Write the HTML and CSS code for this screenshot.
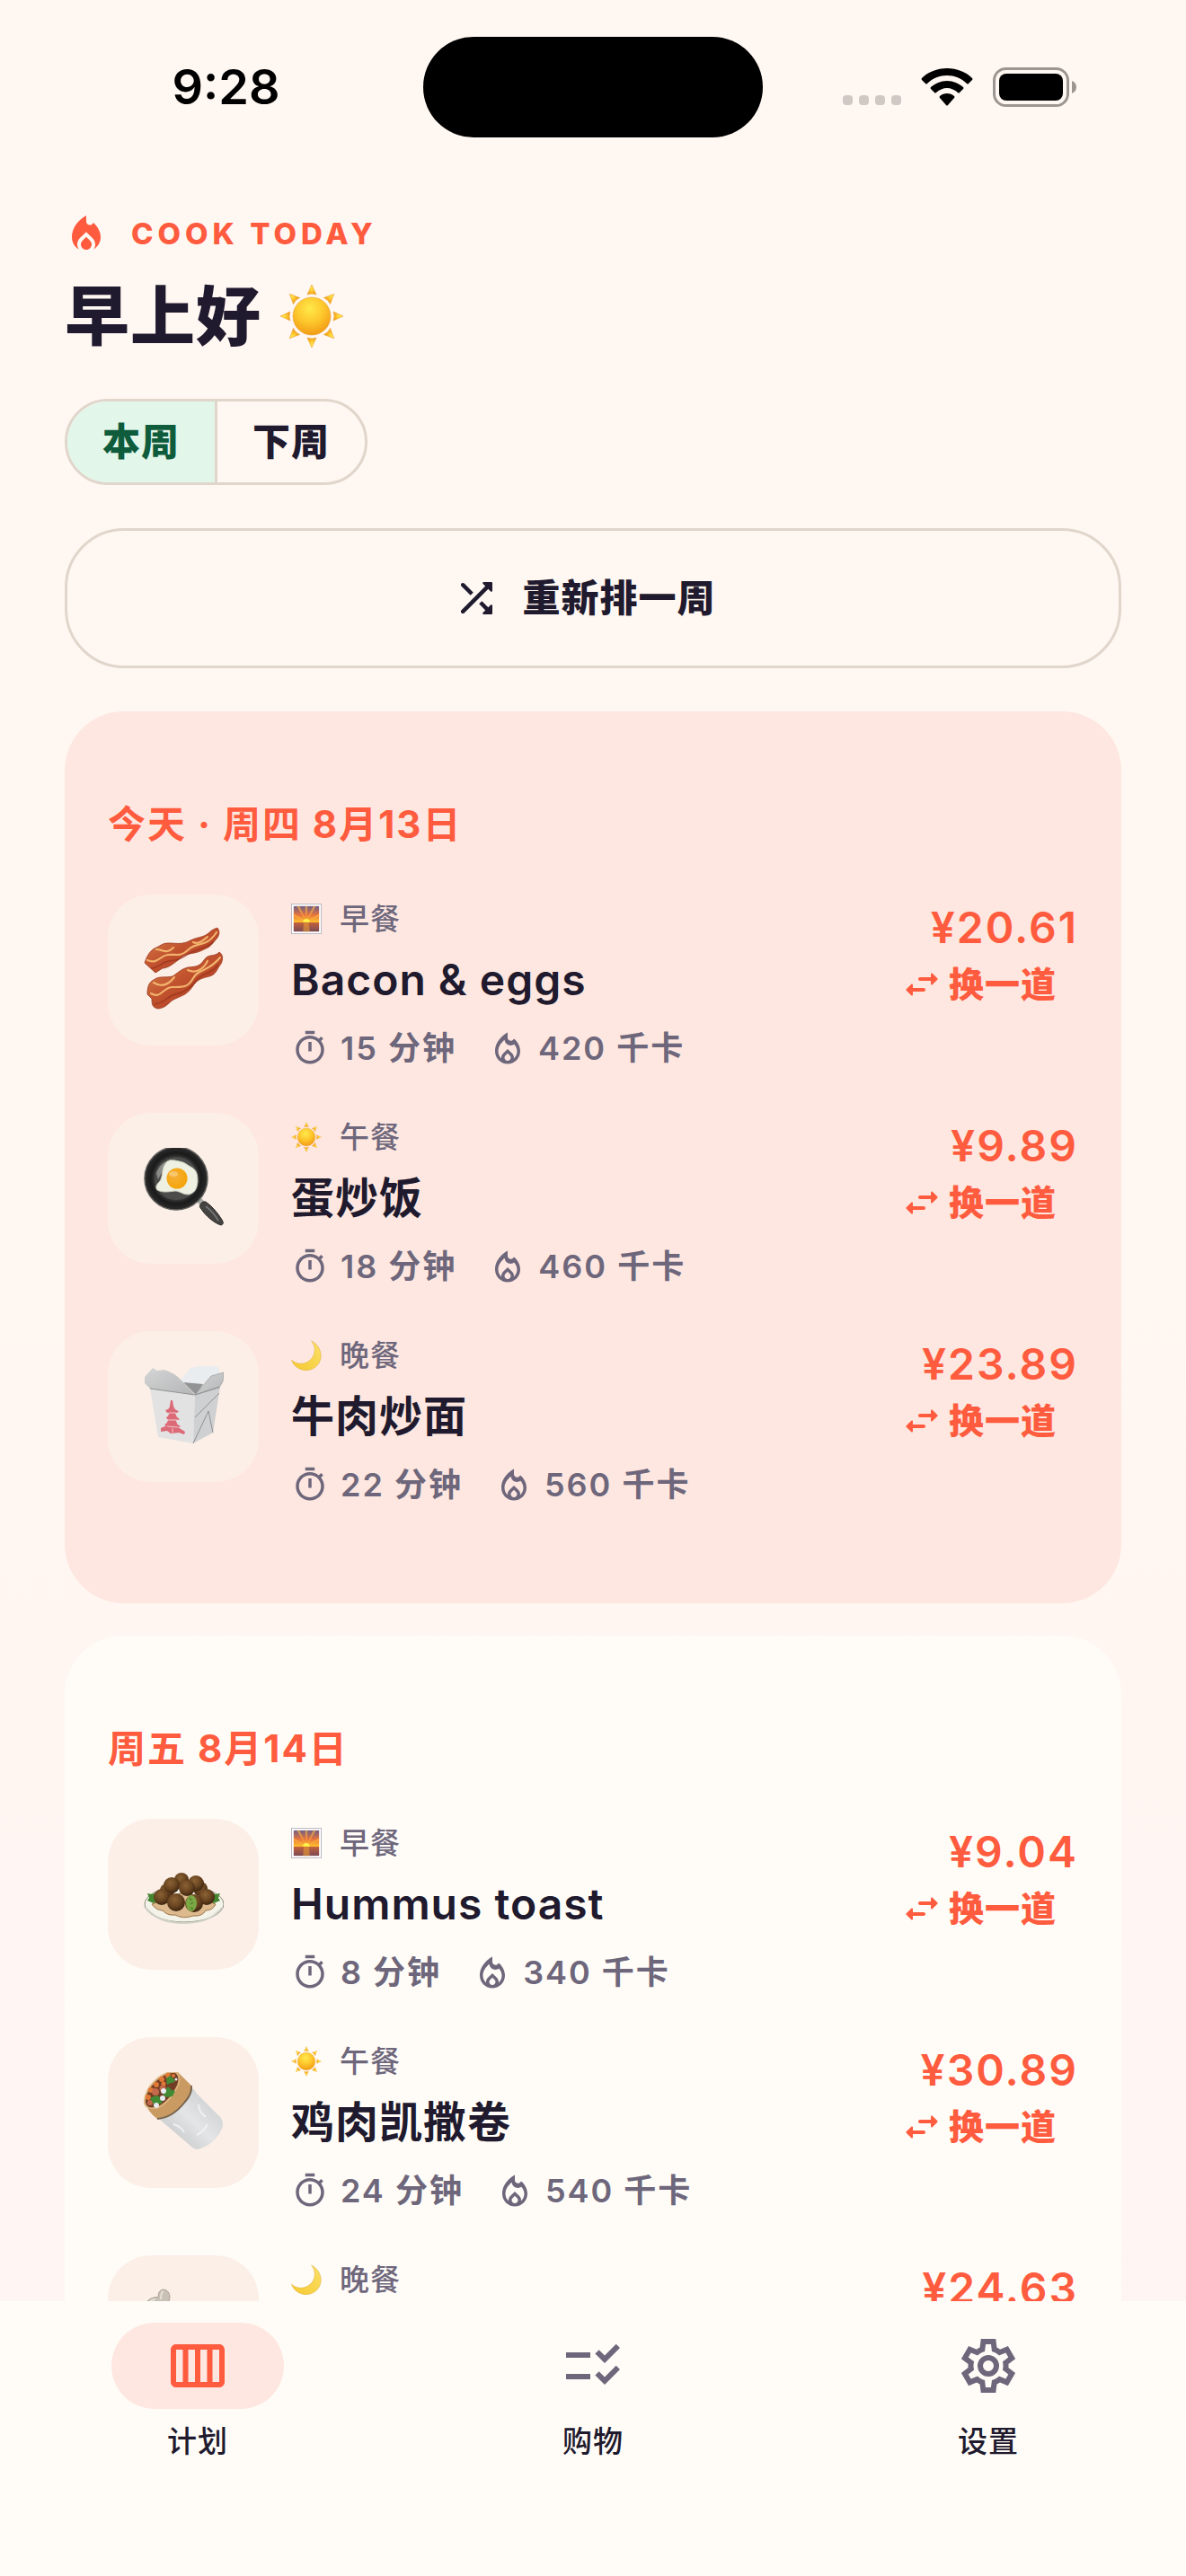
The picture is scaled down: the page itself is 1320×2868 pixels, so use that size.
FILE: index.html
```html
<!DOCTYPE html>
<html lang="zh-CN">
<head>
	<meta charset="UTF-8">
	<meta name="viewport" content="width=device-width, initial-scale=1">
	<title>Cook Today</title>
	<link rel="stylesheet" href="styles.css">
</head>
<body>
	<!-- 图标 -->
	<svg class="sprite" width="0" height="0" aria-hidden="true">
		<defs>
			<radialGradient id="gSun" cx=".45" cy=".3" r=".75">
				<stop offset="0" stop-color="#ffe94a"/><stop offset=".5" stop-color="#fdc62c"/><stop offset="1" stop-color="#f09410"/>
			</radialGradient>
			<linearGradient id="gMoon" x1="0" y1="1" x2="1" y2="0">
				<stop offset="0" stop-color="#f5c92f"/><stop offset="1" stop-color="#fbe06a"/>
			</linearGradient>
			<linearGradient id="gSky" x1="0" y1="0" x2="0" y2="1">
				<stop offset="0" stop-color="#6d5e88"/><stop offset=".35" stop-color="#e8733c"/><stop offset=".62" stop-color="#ffc02e"/><stop offset=".66" stop-color="#c0603c"/><stop offset="1" stop-color="#7c4a55"/>
			</linearGradient>
			<linearGradient id="gBacon" x1="0" y1="0" x2="1" y2="1">
				<stop offset="0" stop-color="#d98a50"/><stop offset=".45" stop-color="#c2532f"/><stop offset="1" stop-color="#a5331c"/>
			</linearGradient>
			<radialGradient id="gPan">
				<stop offset="0" stop-color="#4a4a48"/><stop offset=".66" stop-color="#3c3c3b"/><stop offset=".8" stop-color="#1a1a1a"/><stop offset="1" stop-color="#2b2b2b"/>
			</radialGradient>
			<radialGradient id="gYolk" cx=".4" cy=".4" r=".7">
				<stop offset="0" stop-color="#f6b03a"/><stop offset="1" stop-color="#f5a300"/>
			</radialGradient>
			<radialGradient id="gBall" cx=".42" cy=".35" r=".65">
				<stop offset="0" stop-color="#8b6234"/><stop offset=".6" stop-color="#684420"/><stop offset="1" stop-color="#3d2510"/>
			</radialGradient>
			<linearGradient id="gFoil" x1="0" y1="1" x2="1" y2="0">
				<stop offset="0" stop-color="#b9bcbd"/><stop offset=".5" stop-color="#e3e5e6"/><stop offset="1" stop-color="#c4c7c8"/>
			</linearGradient>
			<linearGradient id="gFlap" x1="0" y1="0" x2="1" y2="1">
				<stop offset="0" stop-color="#d4d5d5"/><stop offset="1" stop-color="#b4b5b6"/>
			</linearGradient>
		</defs>

		<symbol id="fire" viewBox="0 0 24 24">
			<path d="M16 6l-.44.55C14.38 8.02 12 7.19 12 5.3V2S4 6 4 14c0 2.92 1.56 5.47 3.89 6.86-.56-.79-.89-1.76-.89-2.8 0-1.32.52-2.56 1.47-3.5L12 11.1l3.53 3.47c.95.93 1.47 2.17 1.47 3.5 0 1.02-.31 1.96-.85 2.75 1.89-1.15 3.29-3.06 3.71-5.3.66-3.55-1.07-6.9-3.86-9.52z"/>
			<path d="M12 13.9l-2.13 2.09C9.31 16.55 9 17.28 9 18.06c0 1.66 1.35 3 3 3s3-1.34 3-3c0-.78-.31-1.52-.87-2.07z"/>
		</symbol>
		<symbol id="fireLine" viewBox="0 0 24 24">
			<path d="M16 6l-.44.55C14.38 8.02 12 7.19 12 5.3V2S4 6 4 14c0 4.42 3.58 8 8 8s8-3.58 8-8c0-2.96-1.61-6.25-4-8zm-4 14c-1.1 0-2-.87-2-1.94 0-.51.2-.99.58-1.36L12 15.3l1.43 1.4c.37.36.57.85.57 1.36 0 1.07-.9 1.94-2 1.94zm3.96-1.5c.04-.36.22-1.89-1.13-3.22L12 12.5l-2.83 2.78c-1.36 1.34-1.17 2.88-1.13 3.22C6.79 17.4 6 15.79 6 14c0-3.16 2.13-5.65 4.03-7.25.23 1.99 1.93 3.55 3.99 3.55.78 0 1.54-.23 2.18-.66C17.34 10.96 18 12.61 18 14c0 1.79-.79 3.4-2.04 4.5z"/>
		</symbol>
		<symbol id="timer" viewBox="0 0 24 24">
			<path d="M15 1H9v2h6V1zm-4 13h2V8h-2v6zm8.03-6.61l1.42-1.42c-.43-.51-.9-.99-1.41-1.41l-1.42 1.42C16.07 4.74 14.12 4 12 4c-4.97 0-9 4.03-9 9s4.02 9 9 9 9-4.03 9-9c0-2.12-.74-4.07-1.97-5.61zM12 20c-3.87 0-7-3.13-7-7s3.13-7 7-7 7 3.13 7 7-3.13 7-7 7z"/>
		</symbol>
		<symbol id="swap" viewBox="0 0 24 24">
			<path d="M6.14 11.86l-2.78 2.79c-.19.2-.19.51 0 .71l2.78 2.79c.31.32.85.09.85-.35V16H13c.55 0 1-.45 1-1s-.45-1-1-1H6.99v-1.79c0-.45-.54-.67-.85-.35zm14.51-3.21l-2.78-2.79c-.31-.32-.85-.09-.85.35V8H11c-.55 0-1 .45-1 1s.45 1 1 1h6.01v1.79c0 .45.54.67.85.35l2.78-2.79c.2-.19.2-.51.01-.7z"/>
		</symbol>
		<symbol id="shuffle" viewBox="0 0 24 24">
			<path d="M10.59 9.17L6.12 4.7c-.39-.39-1.02-.39-1.41 0s-.39 1.02 0 1.41l4.46 4.46 1.42-1.4zm4.76-4.32l1.19 1.19L4.7 17.88c-.39.39-.39 1.02 0 1.41s1.02.39 1.41 0L17.96 7.46l1.19 1.19c.31.31.85.09.85-.36V4.5c0-.28-.22-.5-.5-.5h-3.79c-.45 0-.67.54-.36.85zm-.52 8.56l-1.41 1.41 3.13 3.13-1.2 1.2c-.31.31-.09.85.36.85h3.79c.28 0 .5-.22.5-.5v-3.79c0-.45-.54-.67-.85-.35l-1.19 1.19-3.13-3.14z"/>
		</symbol>
		<symbol id="week" viewBox="0 0 24 24">
			<path d="M20 4H4c-1.1 0-2 .9-2 2v12c0 1.1.9 2 2 2h16c1.1 0 2-.9 2-2V6c0-1.1-.9-2-2-2zM13 6h2.5v12H13V6zM11 18H8.5V6H11v12zM4 6h2.5v12H4V6zM20 18h-2.5V6H20v12z"/>
		</symbol>
		<symbol id="checklist" viewBox="0 0 24 24">
			<path d="M11 7H2v2h9V7zm0 8H2v2h9v-2zm5.34-4L12.8 7.46l1.41-1.41 2.12 2.12 4.24-4.24L22 5.34 16.34 11zm0 8l-3.54-3.54 1.41-1.41 2.12 2.12 4.24-4.24L22 13.34 16.34 19z"/>
		</symbol>
		<symbol id="settings" viewBox="0 -960 960 960">
			<path d="m370-80-16-128q-13-5-24.5-12T307-235l-119 50L78-375l103-78q-1-7-1-13.5v-27q0-6.5 1-13.5L78-585l110-190 119 50q11-8 23-15t24-12l16-128h220l16 128q13 5 24.5 12t22.5 15l119-50 110 190-103 78q1 7 1 13.5v27q0 6.5-2 13.5l103 78-110 190-118-50q-11 8-23 15t-24 12L590-80H370Zm70-80h79l14-106q31-8 57.5-23.5T639-327l99 41 39-68-86-65q5-14 7-29.5t2-31.5q0-16-2-31.5t-7-29.5l86-65-39-68-99 42q-22-23-48.5-38.5T533-694l-13-106h-79l-14 106q-31 8-57.5 23.5T321-633l-99-41-39 68 86 64q-5 15-7 30t-2 32q0 16 2 31t7 30l-86 65 39 68 99-42q22 23 48.5 38.5T427-266l13 106Z"/>
			<circle cx="480" cy="-480" r="120" fill="none" stroke="currentColor" stroke-width="80"/>
		</symbol>

		<symbol id="sun" viewBox="0 0 72 72">
			<g fill="url(#gSun)" stroke="#e9a33b" stroke-width=".6">
				<path id="ray" d="M36 1l5 11q-5-2-10 0z"/>
				<use href="#ray" transform="rotate(45 36 36)"/>
				<use href="#ray" transform="rotate(90 36 36)"/>
				<use href="#ray" transform="rotate(135 36 36)"/>
				<use href="#ray" transform="rotate(180 36 36)"/>
				<use href="#ray" transform="rotate(225 36 36)"/>
				<use href="#ray" transform="rotate(270 36 36)"/>
				<use href="#ray" transform="rotate(315 36 36)"/>
				<circle cx="36" cy="36" r="21"/>
			</g>
		</symbol>
		<symbol id="moon" viewBox="0 0 72 72">
			<path d="M48 2C64 10 72 26 70 42 67 60 52 71 36 71 20 71 6 62 1 47 14 59 34 58 46 46 58 34 59 16 48 2z" fill="url(#gMoon)" stroke="#dba62c" stroke-width="1"/>
		</symbol>
		<symbol id="sunrise" viewBox="0 0 72 72">
			<rect x="1" y="1" width="70" height="70" fill="#fff" stroke="#b9b5c0" stroke-width="2"/>
			<rect x="6" y="6" width="60" height="60" fill="url(#gSky)"/>
			<path d="M36 43L6 24v6zM36 43L13 6h7zM36 43L33 6h6zM36 43L52 6h7zM36 43l30-19v6z" fill="#ffb540" opacity=".6"/>
			<path d="M28 44a8 8 0 0 1 16 0z" fill="#fff24a"/>
			<path d="M30 45h12l2 21H28z" fill="#e79a35" opacity=".6"/>
		</symbol>

		<symbol id="bacon" viewBox="0 0 90 90" overflow="visible">
			<g fill="url(#gBacon)" stroke="#9b3a20" stroke-width=".8">
				<path d="M2 37C5 28 9 22 15 20 21 17 22 15 29 15 38 15 44 17 53 12 61 8 67 9 73 4 77 0 80-1 83-2 86 2 85 6 83 9 77 16 76 19 68 22 58 28 50 25 43 31 34 38 28 43 22 43L14 48z"/>
				<path d="M5 72C5 65 6 59 12 56 18 51 25 54 33 52 42 46 41 45 50 42 60 41 63 41 68 34 73 26 80 31 85 25 90 28 89 34 87 38 82 44 82 50 74 52 66 54 62 55 57 61 50 72 45 73 36 77 29 80 27 87 17 88 10 87 10 82 10 77z"/>
			</g>
			<g fill="none" stroke="#f1b26c" stroke-width="2.2" stroke-linecap="round">
				<path d="M5 34C16 39 19 29 28 28S42 31 51 22 70 21 82 3"/>
				<path d="M15 22c7 0 11 6 19-2M56 14c5 3 11-2 16-6"/>
				<path d="M9 71C20 78 22 64 33 64S50 65 56 54 72 48 86 31"/>
				<path d="M12 59c8 5 16 3 23-6M50 45c8 4 17 0 22-10"/>
			</g>
			<g fill="none" stroke="#8e2a17" stroke-width="1.4" opacity=".6">
				<path d="M9 43c8 0 12-7 20-8s14-2 22-8 16-4 27-13M12 83c11 0 15-9 24-11s17-6 23-15 16-6 25-18"/>
			</g>
		</symbol>
		<symbol id="pan" viewBox="0 0 90 90">
			<path d="M60 60l5-4 5 5-5 4z" fill="#a7a7a4"/>
			<path d="M64 63q2-4 6-3c7 5 13 12 18 20q3 5-1 6c-7-2-17-10-22-18-2-2-2-3-1-5z" fill="#454442" stroke="#2a2a29"/>
			<path d="M70 65q9 7 14 16" stroke="#777" stroke-width="1.6" fill="none"/>
			<circle cx="37" cy="34" r="35" fill="url(#gPan)" stroke="#5f5f5d" stroke-width="1.5"/>
			<circle cx="37" cy="34" r="24" fill="#4c4d4b"/>
			<path d="M15 28q4-10 11-13-3 10-9 20z" fill="#8b8b88"/>
			<path d="M26 16c4-4 10-2 15-1 6 1 8 4 14 7 6 4 6 10 6 16-1 8-3 12-10 14-7 0-10-4-15-4-8 1-14 2-20-1-3-4 0-7 3-10 4-7 1-14 7-21z" fill="#eef0e2" stroke="#bfc4b4"/>
			<circle cx="38" cy="34" r="11.500" fill="url(#gYolk)"/>
			<ellipse cx="34" cy="29" rx="5" ry="3" fill="#fad187" opacity=".7"/>
		</symbol>
		<symbol id="takeout" viewBox="0 0 90 90">
			<path d="M42 16L53 2q16-4 31-1l2 7-22 13-18-2z" fill="#e9edf0"/>
			<path d="M45 18l22 2-8 12z" fill="#929394"/>
			<path d="M8 25l50 7-2 54-39-7z" fill="#e2e2e3"/>
			<path d="M58 32l28-9-8 51-22 12z" fill="#cfd0d1"/>
			<path d="M58 32L76 11l14-4-1 10-4 7z" fill="url(#gFlap)" stroke="#9a9b9c" stroke-width=".7"/>
			<path d="M2 12l9-10 5 3 8-1q12 4 18 11l16 17L8 25l-6-6z" fill="url(#gFlap)"/>
			<path d="M8 25l50 7 27-9M56 86l17-36 5 24M58 57l27-27" fill="none" stroke="#8f9091" stroke-width="1"/>
			<g fill="#dc6b78">
				<path d="M31 38h2l1 6h-4zM25 49q5-1 5-5h4q1 5 6 6l-2 2H27zM26 57q3-1 3-5h7q1 5 5 7l-2 1-12-1zM24 65q4-2 4-6l9 1q0 5 5 7l-2 1-14-1zM20 73v-4l7-3 12 2 8 5-1 3-6-2-9 1-4-3z"/>
			</g>
			<path d="M29 52h8M28 60h10M27 67l12 1M33 69v5" stroke="#f0c8cc" stroke-width="1"/>
		</symbol>
		<symbol id="falafel" viewBox="0 0 90 90">
			<ellipse cx="46" cy="56" rx="44" ry="20" fill="#f4f3ea" stroke="#8d8f80" stroke-width="1"/>
			<path d="M3 60q14 17 43 17t42-17" fill="none" stroke="#cfd0c4" stroke-width="2"/>
			<path d="M10 56q5 7 12 7 5 6 14 5 9 5 20 1 10 1 14-6 8 0 11-7l-35-14z" fill="#dcba8d" stroke="#9c7448" stroke-width="1"/>
			<path d="M5 44l5 1 5-2 2 9-5 3-7-3 2-3zM86 44l-5 1-5-2-2 9 5 3 7-3-2-3z" fill="#43862f"/>
			<g fill="url(#gBall)">
				<circle cx="43" cy="29" r="8"/><circle cx="64" cy="39" r="8"/><circle cx="27" cy="41" r="8"/>
				<circle cx="59" cy="33" r="9"/><circle cx="32" cy="35" r="9"/><circle cx="49" cy="38" r="9"/>
				<circle cx="21" cy="48" r="9"/><circle cx="71" cy="48" r="9"/><circle cx="57" cy="55" r="10"/><circle cx="37" cy="54" r="10"/>
			</g>
			<ellipse cx="54" cy="55" rx="6" ry="9" fill="#7aa845"/>
			<path d="M52 49l2 3M56 54l-3 2M53 60l3 1" stroke="#557f2b" stroke-width="1.500"/>
		</symbol>
		<symbol id="burrito" viewBox="0 0 90 90">
			<path d="M18 52L54 18q3 0 6 6l27 27q4 8 0 14-8 16-26 21-4 0-8-4z" fill="url(#gFoil)"/>
			<path d="M34 58q8 2 12 9M62 36q0 8 8 14M72 58q-4 8-12 12" stroke="#f0f1f1" stroke-width="2" fill="none"/>
			<path d="M2 32L39 0l15 15q1 9-7 18-14 18-31 19Q5 44 2 32z" fill="#c99a62"/>
			<path d="M16 52q17-1 31-19 8-9 7-18" fill="none" stroke="#79654f" stroke-width="2"/>
			<path d="M2 32C3 17 20-1 36 0q7 4 3 15Q29 35 15 40 2 42 2 32z" fill="#713d25" stroke="#dcb27c" stroke-width="2"/>
			<g fill="#e17835">
				<circle cx="15" cy="14" r="3"/><circle cx="21" cy="8" r="3"/><circle cx="28" cy="4" r="3"/><circle cx="9" cy="20" r="3"/><circle cx="6" cy="28" r="3"/><circle cx="34" cy="4" r="2"/><circle cx="23" cy="13" r="2.500"/>
			</g>
			<g fill="#c46a4c"><circle cx="14" cy="22" r="4"/><circle cx="22" cy="18" r="3.500"/><circle cx="8" cy="34" r="3"/></g>
			<path d="M26 7l4-3 4 3 2 4-5 1-4 2zM24 21l4-5 4 4 4 1-3 6-6 1-5-3zM8 29l4-2 4-1 6 4-1 5-5 1-3 3-2-5z" fill="#438a35"/>
			<g fill="#e8e9f2"><circle cx="23" cy="21" r="3"/><circle cx="22" cy="29" r="3"/><circle cx="15" cy="37" r="3"/><circle cx="37" cy="8" r="1.500"/></g>
		</symbol>
		<symbol id="bone" viewBox="0 0 90 90" overflow="visible">
			<path d="M4 16q0-6 8-8 4-1 5 0 0-9 6-9 7 1 7 9l-2 8 10 16-12 8z" fill="#c9c1b6" stroke="#aaa196" stroke-width="1"/>
			<path d="M20 10q0-8 3-9M8 13q2-3 6-3" fill="none" stroke="#e6e0d8" stroke-width="2"/>
			<circle cx="56" cy="56" r="28" fill="#a4552a"/>
		</symbol>
		<symbol id="wifi" viewBox="0 0 58 42">
			<path d="M29 0C18 0 8 4 1 11q-1 1 0 2l4 4q1 1 2 0C13 11 21 8 29 8s16 3 22 9q1 1 2 0l4-4q1-1 0-2C50 4 40 0 29 0z"/>
			<path d="M29 14c-7 0-13 3-18 7q-1 1 0 2l4 4q1 1 2 0c3-3 8-5 12-5s9 2 12 5q1 1 2 0l4-4q1-1 0-2c-5-4-11-7-18-7z"/>
			<path d="M29 28c-3 0-6 1-8 3q-1 1 0 2l7 8q1 1 2 0l7-8q1-1 0-2c-2-2-5-3-8-3z"/>
		</symbol>
		<symbol id="battery" viewBox="0 0 94 44">
			<rect x="1.500" y="1.500" width="82" height="41" rx="13" fill="none" stroke="#9c9693" stroke-width="3"/>
			<rect x="7" y="7" width="71" height="30" rx="8"/>
			<path d="M88 15q5 2 5 7t-5 7z" fill="#9c9693"/>
		</symbol>
	</svg>

	<div class="app">
		<header class="status">
			<span class="time">9:28</span>
			<span class="island"></span>
			<span class="signals">
				<span class="dots"><i></i><i></i><i></i><i></i></span>
				<svg class="wifi"><use href="#wifi"/></svg>
				<svg class="battery"><use href="#battery"/></svg>
			</span>
		</header>

		<main class="content">
			<p class="brand"><svg class="icon-brand"><use href="#fire"/></svg>COOK TODAY</p>
			<h1 class="greeting">早上好<svg class="greeting-sun"><use href="#sun"/></svg></h1>

			<div class="segment">
				<button type="button" class="segment-btn on" aria-pressed="true">本周</button>
				<button type="button" class="segment-btn" aria-pressed="false">下周</button>
			</div>

			<button type="button" class="reroll"><svg class="icon-shuffle"><use href="#shuffle"/></svg>重新排一周</button>

			<section class="day today">
				<h2 class="day-title">今天 · 周四 8月13日</h2>
				<article class="meal">
					<div class="thumb"><svg><use href="#bacon"/></svg></div>
					<div class="info">
						<p class="slot"><svg><use href="#sunrise"/></svg>早餐</p>
						<h3 class="name">Bacon &amp; eggs</h3>
						<p class="stats"><span><svg><use href="#timer"/></svg>15 分钟</span><span><svg><use href="#fireLine"/></svg>420 千卡</span></p>
					</div>
					<div class="side">
						<span class="price">¥20.61</span>
						<button type="button" class="swap"><svg><use href="#swap"/></svg>换一道</button>
					</div>
				</article>
				<article class="meal">
					<div class="thumb"><svg><use href="#pan"/></svg></div>
					<div class="info">
						<p class="slot"><svg><use href="#sun"/></svg>午餐</p>
						<h3 class="name">蛋炒饭</h3>
						<p class="stats"><span><svg><use href="#timer"/></svg>18 分钟</span><span><svg><use href="#fireLine"/></svg>460 千卡</span></p>
					</div>
					<div class="side">
						<span class="price">¥9.89</span>
						<button type="button" class="swap"><svg><use href="#swap"/></svg>换一道</button>
					</div>
				</article>
				<article class="meal">
					<div class="thumb"><svg><use href="#takeout"/></svg></div>
					<div class="info">
						<p class="slot"><svg><use href="#moon"/></svg>晚餐</p>
						<h3 class="name">牛肉炒面</h3>
						<p class="stats"><span><svg><use href="#timer"/></svg>22 分钟</span><span><svg><use href="#fireLine"/></svg>560 千卡</span></p>
					</div>
					<div class="side">
						<span class="price">¥23.89</span>
						<button type="button" class="swap"><svg><use href="#swap"/></svg>换一道</button>
					</div>
				</article>
			</section>

			<section class="day">
				<h2 class="day-title">周五 8月14日</h2>
				<article class="meal">
					<div class="thumb"><svg><use href="#falafel"/></svg></div>
					<div class="info">
						<p class="slot"><svg><use href="#sunrise"/></svg>早餐</p>
						<h3 class="name">Hummus toast</h3>
						<p class="stats"><span><svg><use href="#timer"/></svg>8 分钟</span><span><svg><use href="#fireLine"/></svg>340 千卡</span></p>
					</div>
					<div class="side">
						<span class="price">¥9.04</span>
						<button type="button" class="swap"><svg><use href="#swap"/></svg>换一道</button>
					</div>
				</article>
				<article class="meal">
					<div class="thumb"><svg><use href="#burrito"/></svg></div>
					<div class="info">
						<p class="slot"><svg><use href="#sun"/></svg>午餐</p>
						<h3 class="name">鸡肉凯撒卷</h3>
						<p class="stats"><span><svg><use href="#timer"/></svg>24 分钟</span><span><svg><use href="#fireLine"/></svg>540 千卡</span></p>
					</div>
					<div class="side">
						<span class="price">¥30.89</span>
						<button type="button" class="swap"><svg><use href="#swap"/></svg>换一道</button>
					</div>
				</article>
				<article class="meal">
					<div class="thumb"><svg><use href="#bone"/></svg></div>
					<div class="info">
						<p class="slot"><svg><use href="#moon"/></svg>晚餐</p>
					</div>
					<div class="side">
						<span class="price">¥24.63</span>
					</div>
				</article>
			</section>
		</main>

		<!-- 底部导航 -->
		<nav class="tabs">
			<a href="#plan" class="tab on"><span class="pill"><svg><use href="#week"/></svg></span>计划</a>
			<a href="#shopping" class="tab"><span class="pill"><svg><use href="#checklist"/></svg></span>购物</a>
			<a href="#settings" class="tab"><span class="pill"><svg><use href="#settings"/></svg></span>设置</a>
		</nav>
	</div>
</body>
</html>
```
FILE: styles.css
```css
* {
	padding:0;
	margin:0;
	box-sizing:border-box;
}
body {
	font-family:Inter, "Noto Sans CJK SC", sans-serif;
	color:#1f1a2e;
	background:#fffcf7;
}
svg {
	display:block;
	flex:none;
	fill:currentColor;
}
button {
	font:inherit;
	color:inherit;
	background:none;
	border:0;
	cursor:pointer;
}
a {
	color:inherit;
	text-decoration:none;
}
.sprite {
	position:absolute;
}
.app {
	height:100vh;
	display:flex;
	flex-direction:column;
	background:linear-gradient(#fff7f2, #fff7f2 50%, #fff4f3);
}
/* 状态栏 */
.status {
	display:grid;
	grid-template-columns:1fr 378px 1fr;
	align-items:center;
	justify-items:center;
	padding:41px 32px 0;
	color:#000;
}
.time {
	font-size:54px;
	font-weight:600;
	line-height:64px;
}
.island {
	width:100%;
	height:112px;
	border-radius:56px;
	background:#000;
}
.signals {
	display:flex;
	align-items:center;
	gap:22px;
}
.dots {
	display:flex;
	gap:7px;
	align-self:flex-end;
	padding-bottom:2px;
}
.dots i {
	width:11px;
	height:11px;
	border-radius:4px;
	background:#cfc8c5;
}
.wifi {
	width:58px;
	height:42px;
}
.battery {
	width:94px;
	height:44px;
}
/* 内容 */
.content {
	flex:1;
	min-height:0;
	overflow:hidden;
	padding:83px 72px 0;
}
.brand {
	display:flex;
	align-items:center;
	gap:26px;
	font-size:33px;
	font-weight:800;
	line-height:48px;
	letter-spacing:5px;
	color:#ff5b3e;
}
.icon-brand {
	width:48px;
	height:48px;
}
.greeting {
	display:flex;
	align-items:center;
	gap:20px;
	margin-top:12px;
	font-size:72px;
	font-weight:800;
	line-height:112px;
	letter-spacing:1px;
}
.greeting-sun {
	width:72px;
	height:72px;
}
.segment {
	display:inline-flex;
	margin-top:36px;
	height:96px;
	border:3px solid #e0d6cb;
	border-radius:48px;
	overflow:hidden;
	vertical-align:top;
}
.segment-btn {
	padding:0 39px;
	font-size:42px;
	font-weight:800;
	line-height:60px;
	letter-spacing:1px;
}
.segment-btn.on {
	color:#0f5c3c;
	background:#e2f6ea;
	border-right:3px solid #e0d6cb;
}
.reroll {
	display:flex;
	align-items:center;
	justify-content:center;
	gap:24px;
	width:100%;
	height:156px;
	margin:48px 0;
	padding-right:20px;
	border:3px solid #e0d6cb;
	border-radius:66px;
	font-size:42px;
	font-weight:800;
	line-height:60px;
	letter-spacing:1px;
}
.icon-shuffle {
	width:54px;
	height:54px;
}
.day {
	padding:84px 48px 60px;
	margin-bottom:36px;
	border-radius:66px;
	background:#fffcf7;
}
.today {
	background:#fee7e0;
}
.day-title {
	margin-bottom:36px;
	font-size:42px;
	font-weight:700;
	line-height:84px;
	letter-spacing:2px;
	color:#ff5b3e;
}
.meal {
	display:flex;
	align-items:flex-start;
	gap:36px;
	margin-bottom:36px;
}
.thumb {
	display:flex;
	align-items:center;
	justify-content:center;
	width:168px;
	height:168px;
	border-radius:48px;
	background:#fcefe7;
}
.meal:last-child {
	margin-bottom:0;
}
.today .meal:last-child {
	margin-bottom:36px;
}
.thumb svg {
	width:90px;
	height:90px;
	overflow:visible;
}
.info {
	flex:1;
}
.slot {
	display:flex;
	align-items:center;
	gap:20px;
	font-size:33px;
	font-weight:500;
	line-height:54px;
	letter-spacing:1px;
	color:#6e677c;
}
.slot svg {
	width:34px;
	height:34px;
}
.name {
	font-size:48px;
	font-weight:600;
	line-height:81px;
	letter-spacing:1px;
}
.stats {
	display:flex;
	gap:36px;
	font-size:36px;
	font-weight:600;
	line-height:72px;
	letter-spacing:2px;
	color:#6e677c;
}
.stats span {
	display:flex;
	align-items:center;
	gap:13px;
}
.stats svg {
	width:42px;
	height:42px;
}
.side {
	display:flex;
	flex-direction:column;
	align-items:flex-end;
	padding-top:6px;
	color:#ff5b3e;
}
.price {
	font-size:48px;
	font-weight:600;
	line-height:62px;
	letter-spacing:2px;
}
.swap {
	display:flex;
	align-items:center;
	gap:6px;
	height:64px;
	padding-right:24px;
	font-size:39px;
	font-weight:800;
	line-height:60px;
	letter-spacing:1px;
}
.swap svg {
	width:48px;
	height:48px;
}
/* 底部导航 */
.tabs {
	display:grid;
	grid-template-columns:repeat(3, 1fr);
	height:306px;
	padding-top:24px;
	background:#fffcf7;
}
.tab {
	display:flex;
	flex-direction:column;
	align-items:center;
	gap:12px;
	font-size:33px;
	font-weight:500;
	line-height:48px;
	letter-spacing:1px;
}
.pill {
	display:flex;
	align-items:center;
	justify-content:center;
	width:192px;
	height:96px;
	border-radius:48px;
	color:#6e677c;
}
.tab.on .pill {
	color:#ff5b3e;
	background:#fee7e0;
}
.pill svg {
	width:72px;
	height:72px;
}
```
